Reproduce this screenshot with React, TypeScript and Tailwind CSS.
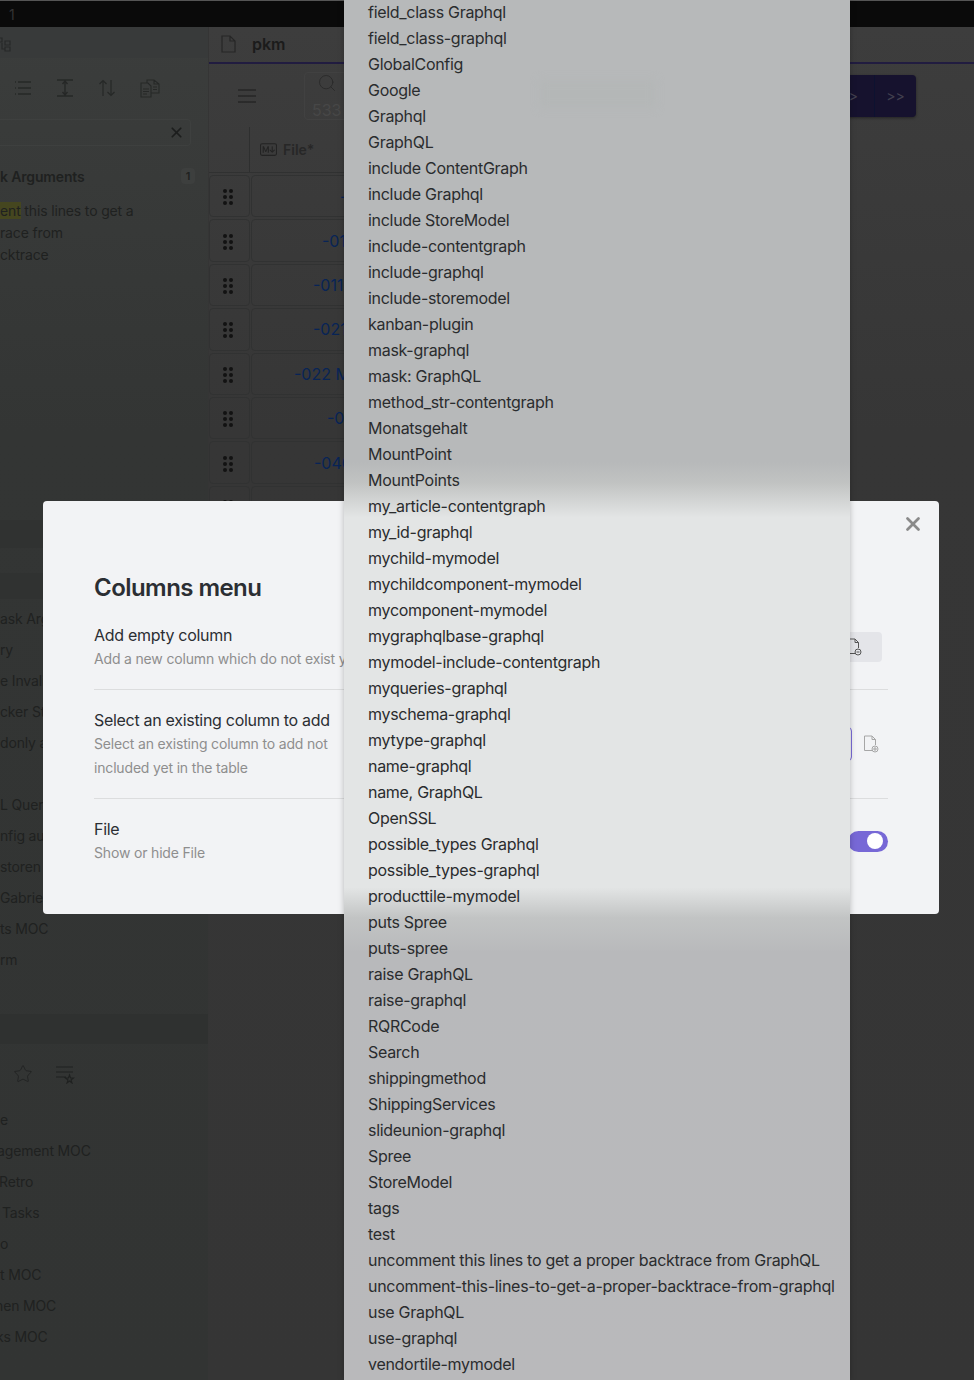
import { Search, X, Star } from "lucide-react";
import { BsMarkdown } from "react-icons/bs";

const tags = [
  "field_class Graphql","field_class-graphql","GlobalConfig","Google","Graphql","GraphQL","include ContentGraph","include Graphql","include StoreModel","include-contentgraph","include-graphql","include-storemodel","kanban-plugin","mask-graphql","mask: GraphQL","method_str-contentgraph","Monatsgehalt","MountPoint","MountPoints","my_article-contentgraph","my_id-graphql","mychild-mymodel","mychildcomponent-mymodel","mycomponent-mymodel","mygraphqlbase-graphql","mymodel-include-contentgraph","myqueries-graphql","myschema-graphql","mytype-graphql","name-graphql","name, GraphQL","OpenSSL","possible_types Graphql","possible_types-graphql","producttile-mymodel","puts Spree","puts-spree","raise GraphQL","raise-graphql","RQRCode","Search","shippingmethod","ShippingServices","slideunion-graphql","Spree","StoreModel","tags","test","uncomment this lines to get a proper backtrace from GraphQL","uncomment-this-lines-to-get-a-proper-backtrace-from-graphql","use GraphQL","use-graphql","vendortile-mymodel",
];

const rows = [
  { text: "-", pad: "pl-[88px]" },
  { text: "-01", pad: "pl-[70px]" },
  { text: "-011", pad: "pl-[61px]" },
  { text: "-021", pad: "pl-[61px]" },
  { text: "-022 M", pad: "pl-[42px]" },
  { text: "-0", pad: "pl-[75px]" },
  { text: "-040", pad: "pl-[62px]" },
  { text: "", pad: "pl-[62px]" },
];

const middle = ["ask Arg", "ry", "e Invalid", "cker St", "donly a", "", "L Quer", "nfig au", "storen", "Gabriel", "ts MOC", "rm"];
const bottom = [
  { text: "e", shift: "ml-[0px]" },
  { text: "agement MOC", shift: "-ml-[3px]" },
  { text: "Retro", shift: "-ml-[1px]" },
  { text: "Tasks", shift: "ml-[2px]" },
  { text: "o", shift: "ml-[0px]" },
  { text: "t MOC", shift: "ml-[0px]" },
  { text: "hen MOC", shift: "-ml-[5px]" },
  { text: "ks MOC", shift: "-ml-[4px]" },
];

function Grip() {
  return (
    <svg width="10" height="16" viewBox="0 0 10 16" fill="#121212">
      <circle cx="2" cy="2" r="2" /><circle cx="8" cy="2" r="2" />
      <circle cx="2" cy="8" r="2" /><circle cx="8" cy="8" r="2" />
      <circle cx="2" cy="14" r="2" /><circle cx="8" cy="14" r="2" />
    </svg>
  );
}

function FileBadge({ color, plus }: { color: string; plus?: boolean }) {
  return (
    <svg width="16" height="18" viewBox="0 0 16 18" fill="none" stroke={color} strokeWidth="1">
      <path d="M9 15.5H1.5V1H9L12.5 4.5V10" />
      <path d="M9 1V4.5H12.5" />
      <circle cx="12" cy="14" r="3" />
      {plus ? <path d="M12 12V16M10 14H14" /> : <path d="M10.5 14H13.5" />}
    </svg>
  );
}

export default function App() {
  return (
    <div className="relative flex h-[1380px] w-[974px] flex-col overflow-hidden bg-[#353535] font-[family-name:Inter,sans-serif]">
      <div className="flex h-[27px] shrink-0 items-center border-t border-[#555555] bg-[#0a0a0a] pl-[9px] text-[14px] text-[#333333]">1</div>

      <div className="flex flex-1">
        <aside className="flex w-[208px] shrink-0 flex-col overflow-hidden bg-[linear-gradient(#3b3d3c,#333534_30%,#323433)] text-[14px] tracking-[-0.15px] text-[#1f2120]">
          <div className="flex h-[31px] items-center bg-[#383a3a]">
            <svg width="12" height="18" viewBox="0 0 12 18" fill="none" stroke="#272929" strokeWidth="1.2">
              <path d="M-2 4H2V8H-2ZM5 7H10V11H5ZM5 13H10V17H5ZM2 9V15H5" />
            </svg>
          </div>
          <div className="flex h-[61px] items-center gap-[24px] pl-[14px] pb-[1px]">
            <svg width="18" height="18" viewBox="0 0 18 18" stroke="#262827" strokeWidth="1.4" fill="none">
              <path d="M4 3H17M4 9H17M4 15H17M1 3H2M1 9H2M1 15H2" />
            </svg>
            <svg width="18" height="18" viewBox="0 0 18 18" stroke="#262827" strokeWidth="1.4" fill="none">
              <path d="M1 1H17M1 17H17M9 2V16M6.5 5L9 2L11.5 5M6.5 13L9 16L11.5 13" />
            </svg>
            <svg width="18" height="18" viewBox="0 0 18 18" stroke="#262827" strokeWidth="1.2" fill="none">
              <path d="M5 17V1.5M1.5 5L5 1.5L8.5 5M13 1V16.5M9.5 13L13 16.5L16.5 13" />
            </svg>
            <svg width="20" height="20" viewBox="0 0 20 20" stroke="#262827" strokeWidth="1.1" fill="none">
              <path d="M1 5H8L11 8V19H1ZM7 5V2H14L19 6V15H11M14 2V6H19M3 11H9M3 13.500H9M3 16H7M13 9H17M13 11.500H17" />
            </svg>
          </div>
          <div className="flex h-[27px] w-[191px] items-center justify-end rounded-r-[4px] border border-l-0 border-[#3e403f] pr-[5px]">
            <X size={17} strokeWidth={2.4} color="#1c1e1d" />
          </div>
          <div className="mt-[16px] flex h-[28px] w-[195px] items-center justify-between">
            <span className="font-semibold">k Arguments</span>
            <span className="flex h-[16px] w-[14px] items-center justify-center rounded-[4px] bg-[#3d3f3e] text-[11px] font-semibold">1</span>
          </div>
          <div className="mt-[10px] leading-[22px]">
            <div><span className="bg-[#45461f]">ent</span> this lines to get a</div>
            <div>race from</div>
            <div>cktrace</div>
          </div>

          <div className="mt-[254px] h-[28px] bg-[#303231]" />
          <div className="mt-[25px] h-[26px] bg-[#303231]" />
          <div className="mt-[4px] flex flex-col">
            {middle.map((m, i) => (
              <div key={i} className="flex h-[31px] items-center whitespace-nowrap">{m}</div>
            ))}
          </div>
          <div className="mt-[39px] h-[30px] bg-[#2f3130]" />
          <div className="flex h-[60px] items-center gap-[22px] pl-[13px]">
            <Star size={20} strokeWidth={1} color="#1f2120" />
            <svg width="20" height="20" viewBox="0 0 20 20" stroke="#1f2120" strokeWidth="1.1" fill="none">
              <path d="M1 3H18M1 8H18M1 13H11M14.500 11L15.500 14H18.500L16 16L17 19L14.500 17L12 19L13 16L10.500 14H13.500Z" />
            </svg>
          </div>
          <div className="flex flex-col">
            {bottom.map((b) => (
              <div key={b.text} className={`flex h-[31px] items-center whitespace-nowrap ${b.shift}`}>{b.text}</div>
            ))}
          </div>
        </aside>

        <main className="flex flex-1 flex-col border-l border-[#353535] bg-[linear-gradient(#3d3d3d,#363636_30%,#353535)]">
          <div className="flex h-[35px] items-center pb-[2px] pl-[12px]">
            <svg width="15" height="18" viewBox="0 0 15 18" fill="none" stroke="#262626" strokeWidth="1.2">
              <path d="M1 1H9L14 6V17H1ZM9 1V6H14" />
            </svg>
            <span className="ml-[16px] text-[16px] font-semibold text-[#1b1b1b]">pkm</span>
          </div>
          <div className="h-[2px] bg-[#211c40]" />
          <div className="flex h-[63px] items-center">
            <svg className="ml-[29px]" width="18" height="14" viewBox="0 0 18 14" stroke="#262626" strokeWidth="1.5">
              <path d="M0 1H18M0 7H18M0 13H18" />
            </svg>
            <div className="ml-[48px] flex h-[48px] w-[120px] flex-col rounded-[4px] border border-[#414141] pl-[7px] text-[16px] leading-[18px] text-[#474747]">
              <Search size={20} strokeWidth={1.2} color="#2b2b2b" className="ml-[5px]" />
              <span className="mt-[8px]">533</span>
            </div>
            <div className="ml-auto mr-[58px] flex h-[42px] items-stretch rounded-[4px] bg-[#16122e] text-[14px] text-[#42404f] shadow-[0_1px_3px_rgba(0,0,0,0.4)]">
              <div className="flex w-[42px] items-center justify-end pr-[16px]">&gt;</div>
              <div className="flex w-[42px] items-center justify-center border-l border-[#0d1230]">&gt;&gt;</div>
            </div>
          </div>
          <div className="flex h-[46px] w-[200px] border-b border-[#303131]">
            <div className="w-[41px] border-r border-[#2e2f2f]" />
            <div className="flex items-center gap-[6px] pl-[10px] text-[14px] font-semibold text-[#272727]">
              <BsMarkdown size={17} color="#232323" />
              <span>File*</span>
            </div>
          </div>
          <div className="mt-[1px] flex w-[200px] flex-col">
            {rows.map((r) => (
              <div key={r.text} className="flex h-[44.400px] gap-[1px] py-[1px]">
                <div className="flex w-[41px] items-center justify-center rounded-[4px] border border-[#313232] pr-[3px] pt-[2px]">
                  <Grip />
                </div>
                <div className={`flex flex-1 items-center rounded-[4px] border border-[#313232] text-[16px] text-[#082456] ${r.pad}`}>
                  {r.text}
                </div>
              </div>
            ))}
          </div>
        </main>
      </div>

      <div className="absolute left-[43px] top-[501px] h-[413px] w-[896px] rounded-[4px] bg-[#f2f3f5] px-[51px] pt-[71px] text-[#2b2e33]">
        <button className="absolute right-[15px] top-[12px]">
          <X size={22} strokeWidth={3} color="#8a8a8a" />
        </button>
        <h1 className="mb-[19px] text-[24px] font-semibold leading-[32px] tracking-[-0.55px]">Columns menu</h1>
        <div className="flex items-center justify-between border-b border-[#dcddde] pb-[18px]">
          <div>
            <div className="text-[16px] leading-[24px] tracking-[-0.3px]">Add empty column</div>
            <div className="text-[14px] leading-[24px] tracking-[-0.17px] text-[#8e8e8e]">Add a new column which do not exist yet</div>
          </div>
          <div className="mr-[6px] flex h-[30px] w-[60px] items-center justify-end rounded-[4px] bg-[#e4e5e9] pr-[20px]">
            <FileBadge color="#555555" />
          </div>
        </div>
        <div className="flex items-center justify-between border-b border-[#dcddde] pb-[18px] pt-[18px]">
          <div className="w-[250px]">
            <div className="whitespace-nowrap text-[16px] leading-[24px] tracking-[-0.3px]">Select an existing column to add</div>
            <div className="text-[14px] leading-[24px] tracking-[-0.17px] text-[#8e8e8e]">Select an existing column to add not included yet in the table</div>
          </div>
          <div className="flex items-center">
            <div className="h-[34px] w-[120px] rounded-[4px] border border-[#7b6cd9]" />
            <div className="ml-[11px] mr-[9px]">
              <FileBadge color="#a6a6a6" plus />
            </div>
          </div>
        </div>
        <div className="flex items-center justify-between pt-[18px]">
          <div>
            <div className="text-[16px] leading-[24px] tracking-[-0.3px]">File</div>
            <div className="text-[14px] leading-[24px] tracking-[-0.17px] text-[#8e8e8e]">Show or hide File</div>
          </div>
          <div className="flex h-[21px] w-[40px] items-center justify-end rounded-full bg-[#7768d6] pr-[5px]">
            <div className="h-[16px] w-[16px] rounded-full bg-white" />
          </div>
        </div>
      </div>

      <div className="absolute left-[344px] top-0 h-[1380px] w-[506px] overflow-hidden bg-[linear-gradient(#b7b9ba_0%,#b7b9ba_33.500%,#c1c3c2_35%,#e3e5e5_37.500%,#e3e5e5_64.300%,#c2c4c4_66.500%,#b8b9bb_69%,#b9b9bb_100%)] pl-[24px] text-[16px] tracking-[-0.29px] text-[#2a2c2e] shadow-[0_0_6px_rgba(0,0,0,0.25)]">
        <div className="absolute left-[196px] top-[80px] h-[28px] w-[115px] bg-[#b4b7b7] blur-[4px]" />
        <div className="relative -mt-[1px] flex flex-col">
          {tags.map((t) => (
            <div key={t} className="h-[26px] whitespace-nowrap leading-[26px]">{t}</div>
          ))}
        </div>
      </div>
    </div>
  );
}
